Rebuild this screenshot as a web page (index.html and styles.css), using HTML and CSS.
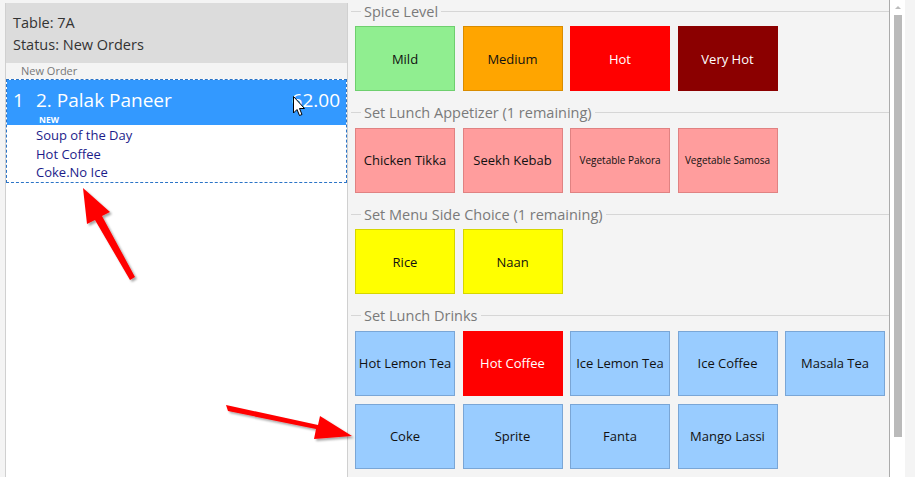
FILE: index.html
```html
<!DOCTYPE html>
<html lang="en">
<head>
    <meta charset="UTF-8">
    <title>Order Entry</title>
    <link rel="stylesheet" href="styles.css">
</head>
<body>
    <div class="order-panel">
        <div class="order-head">
            <p>Table: 7A</p>
            <p>Status: New Orders</p>
        </div>
        <div class="order-caption">New Order</div>
        <div class="order-list">
            <div class="order-item">
                <div class="item-main">
                    <span class="item-qty">1</span>
                    <span class="item-name">2. Palak Paneer</span>
                    <span class="item-price">62.00</span>
                </div>
                <div class="item-tag">NEW</div>
                <ul class="item-subs">
                    <li>Soup of the Day</li>
                    <li>Hot Coffee</li>
                    <li>Coke.No Ice</li>
                </ul>
            </div>
        </div>
    </div>

    <div class="menu-panel">
        <div class="menu-scroll">
            <section class="group">
                <div class="group-title"><span>Spice Level</span></div>
                <div class="btn-grid">
                    <button class="opt mild">Mild</button>
                    <button class="opt medium">Medium</button>
                    <button class="opt hot">Hot</button>
                    <button class="opt veryhot">Very Hot</button>
                </div>
            </section>

            <section class="group">
                <div class="group-title"><span>Set Lunch Appetizer (1 remaining)</span></div>
                <div class="btn-grid">
                    <button class="opt pink">Chicken Tikka</button>
                    <button class="opt pink">Seekh Kebab</button>
                    <button class="opt pink small">Vegetable Pakora</button>
                    <button class="opt pink small">Vegetable Samosa</button>
                </div>
            </section>

            <section class="group">
                <div class="group-title"><span>Set Menu Side Choice (1 remaining)</span></div>
                <div class="btn-grid">
                    <button class="opt yellow">Rice</button>
                    <button class="opt yellow">Naan</button>
                </div>
            </section>

            <section class="group">
                <div class="group-title"><span>Set Lunch Drinks</span></div>
                <div class="btn-grid">
                    <button class="opt blue">Hot Lemon Tea</button>
                    <button class="opt hot">Hot Coffee</button>
                    <button class="opt blue">Ice Lemon Tea</button>
                    <button class="opt blue">Ice Coffee</button>
                    <button class="opt blue">Masala Tea</button>
                    <button class="opt blue">Coke</button>
                    <button class="opt blue">Sprite</button>
                    <button class="opt blue">Fanta</button>
                    <button class="opt blue">Mango Lassi</button>
                </div>
            </section>
        </div>
        <div class="scrollbar">
            <div class="scroll-up"></div>
            <div class="scroll-thumb"></div>
        </div>
        <div class="edge"></div>
    </div>

    <!-- annotation overlay: arrows + mouse pointer -->
    <svg class="overlay" width="915" height="477" viewBox="0 0 915 477">
        <defs>
            <filter id="shadow" x="-20%" y="-20%" width="140%" height="140%">
                <feDropShadow dx="2" dy="2" stdDeviation="1.2" flood-color="#000" flood-opacity="0.35"/>
            </filter>
        </defs>
        <g fill="#ff0000" filter="url(#shadow)">
            <path d="M130 280 L135 277 L102 216 L110 212 L83 188 L87 224 L95 220 Z"/>
            <path d="M226 405 L228 411 L316 429 L314 439 L352 436 L320 416 L318 425 Z"/>
        </g>
        <path class="pointer" d="M293.5 96.5 L293.5 113 L297 109.5 L299.5 115.5 L302 114.5 L299.5 108.5 L304.5 108.5 Z"/>
    </svg>
</body>
</html>
```

FILE: styles.css
```css
body {
    margin: 0;
    width: 915px;
    height: 477px;
    display: flex;
    background-color: #f4f4f4;
    font-family: "Open Sans", "Noto Sans", Arial, sans-serif;
    overflow: hidden;
    position: relative;
}

p {
    margin: 0;
}

/* left side: order ticket */
.order-panel {
    width: 341px;
    margin: 3px 0 0 5px;
    background-color: #fff;
    border-left: 1px solid #d0d0d0;
    border-right: 1px solid #d0d0d0;
    display: flex;
    flex-direction: column;
}

.order-head {
    height: 60px;
    background-color: #dcdcdc;
    padding: 9px 0 0 7px;
    box-sizing: border-box;
    font-size: 14.5px;
    line-height: 22px;
    color: #333;
}

.order-caption {
    height: 16px;
    line-height: 16px;
    background-color: #f4f4f4;
    padding-left: 15px;
    font-size: 11px;
    color: #777;
}

.order-list {
    flex: 1;
}

.order-item {
    border: 1px dashed #2b74c7;
}

.item-main {
    display: flex;
    align-items: center;
    height: 33px;
    padding-top: 3px;
    background-color: #3399ff;
    color: #fff;
    font-size: 19px;
}

.item-qty {
    width: 23px;
    padding-left: 6px;
}

.item-name {
    flex: 1;
}

.item-price {
    padding-right: 6px;
}

.item-tag {
    height: 9px;
    line-height: 7px;
    background-color: #3399ff;
    color: #fff;
    font-size: 8.5px;
    font-weight: bold;
    padding-left: 32px;
}

.item-subs {
    list-style: none;
    margin: 0;
    padding: 1px 0 0 29px;
    font-size: 13px;
    line-height: 18.5px;
    color: #1c1c8a;
}

/* right side: option groups */
.menu-panel {
    flex: 1;
    display: flex;
}

.menu-scroll {
    flex: 1;
    padding: 0 0 0 3px;
}

.group {
    margin-bottom: 10.5px;
}

.group-title {
    display: flex;
    align-items: center;
    height: 22px;
    font-size: 14.5px;
    color: #7a7a7a;
}

.group-title::before,
.group-title::after {
    content: "";
    height: 1px;
    background-color: #d6d6d6;
}

.group-title::before {
    width: 10px;
    margin-right: 3px;
}

.group-title::after {
    flex: 1;
    margin-left: 3px;
}

.btn-grid {
    display: grid;
    grid-template-columns: repeat(5, 100px);
    column-gap: 7.5px;
    row-gap: 8px;
    margin: 4px 0 0 4px;
}

.opt {
    height: 65px;
    padding: 0;
    border: 1px solid;
    font-family: inherit;
    font-size: 13px;
    color: #111;
}

.opt.small {
    font-size: 10px;
}

.mild {
    background-color: #90ee90;
    border-color: #6ecf6e;
}

.medium {
    background-color: #ffa500;
    border-color: #d98c00;
}

.hot {
    background-color: #ff0000;
    border-color: #ff0000;
    color: #fff;
}

.veryhot {
    background-color: #8b0000;
    border-color: #8b0000;
    color: #fff;
}

.pink {
    background-color: #ff9d9d;
    border-color: #e08282;
}

.yellow {
    background-color: #ffff00;
    border-color: #d6d600;
}

.blue {
    background-color: #99ccff;
    border-color: #7aa6d6;
}

/* fake scrollbar */
.scrollbar {
    width: 15px;
    border-left: 1px solid #ababab;
    background-color: #fff;
}

.scroll-up {
    margin: 6px auto 0;
    width: 0;
    height: 0;
    border-left: 3px solid transparent;
    border-right: 3px solid transparent;
    border-bottom: 3px solid #bcbcbc;
}

.scroll-thumb {
    width: 8px;
    height: 422px;
    margin: 6px 0 0 4px;
    background-color: #bababa;
}

.edge {
    width: 10px;
    background-color: #f4f4f4;
}

.overlay {
    position: absolute;
    left: 0;
    top: 0;
    pointer-events: none;
}

.pointer {
    fill: #fff;
    stroke: #000;
    stroke-width: 1;
}
```
